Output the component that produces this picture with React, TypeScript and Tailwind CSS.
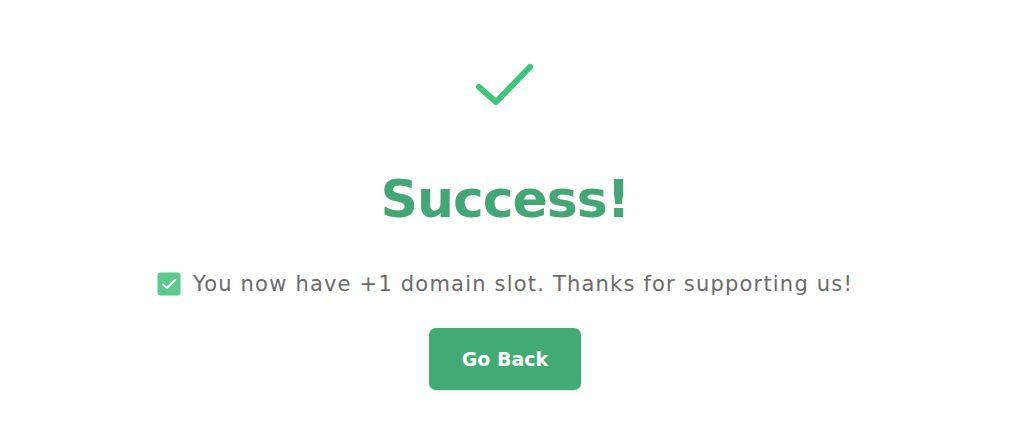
import React from "react";

export default function App() {
  return (
    <div className="w-[1010px] h-[425px] bg-white flex flex-col items-center" style={{ fontFamily: '"DejaVu Sans", "Open Sans", sans-serif' }}>
      <svg className="mt-[62px]" width="60" height="46" viewBox="0 0 60 46" fill="none">
        <path d="M4 25 L21 40 L55 5" stroke="#3ec47a" strokeWidth="6" strokeLinecap="round" strokeLinejoin="round" />
      </svg>
      <h1 className="mt-[65px] text-[52px] leading-none font-extrabold text-[#44a674] tracking-[-1px]">Success!</h1>
      <div className="mt-[47px] flex items-center gap-[12px]">
        <svg width="24" height="24" viewBox="0 0 24 24">
          <rect x="0.5" y="0.5" width="23" height="23" rx="3" fill="#5ec98e" />
          <path d="M6 12.5 L10 16 L18 8" stroke="white" strokeWidth="2" fill="none" strokeLinecap="round" strokeLinejoin="round" />
        </svg>
        <p className="text-[21px] leading-none text-[#6b6b6b] tracking-[1.2px]">You now have +1 domain slot. Thanks for supporting us!</p>
      </div>
      <button className="mt-[32px] w-[152px] h-[62px] rounded-[7px] bg-[#42ab75] text-white text-[19px] font-semibold shadow-sm">Go Back</button>
    </div>
  );
}
